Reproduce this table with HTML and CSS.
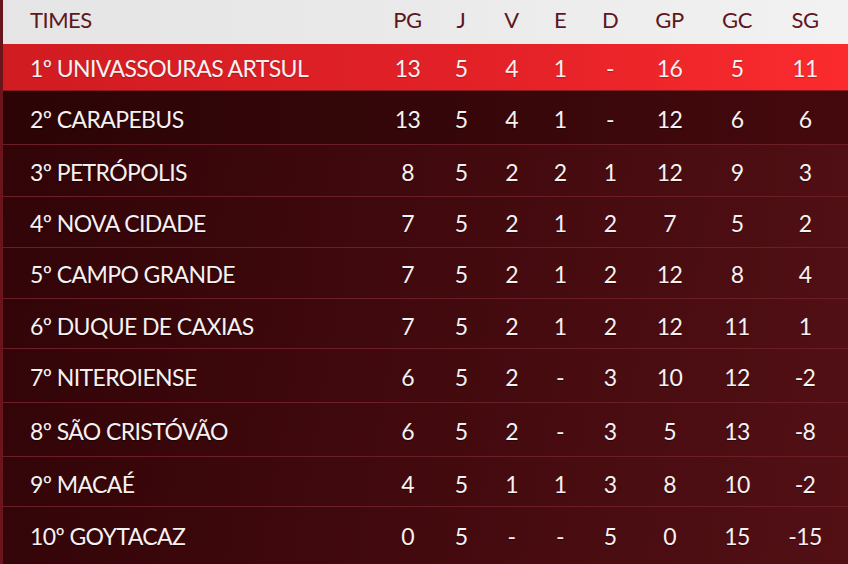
FILE: index.html
```html
<!DOCTYPE html>
<html lang="pt-BR">
<head>
<meta charset="utf-8">
<title>Classificação</title>
<link rel="stylesheet" href="styles.css">
</head>
<body>
<div class="table">
  <div class="row head">
    <div class="name">TIMES</div><div>PG</div><div>J</div><div>V</div><div>E</div><div>D</div><div>GP</div><div>GC</div><div>SG</div>
  </div>
  <div class="row lead">
    <div class="name">1º UNIVASSOURAS ARTSUL</div><div>13</div><div>5</div><div>4</div><div>1</div><div>-</div><div>16</div><div>5</div><div>11</div>
  </div>
  <div class="row tall">
    <div class="name">2º CARAPEBUS</div><div>13</div><div>5</div><div>4</div><div>1</div><div>-</div><div>12</div><div>6</div><div>6</div>
  </div>
  <div class="row">
    <div class="name">3º PETRÓPOLIS</div><div>8</div><div>5</div><div>2</div><div>2</div><div>1</div><div>12</div><div>9</div><div>3</div>
  </div>
  <div class="row short">
    <div class="name">4º NOVA CIDADE</div><div>7</div><div>5</div><div>2</div><div>1</div><div>2</div><div>7</div><div>5</div><div>2</div>
  </div>
  <div class="row short">
    <div class="name">5º CAMPO GRANDE</div><div>7</div><div>5</div><div>2</div><div>1</div><div>2</div><div>12</div><div>8</div><div>4</div>
  </div>
  <div class="row shorter">
    <div class="name">6º DUQUE DE CAXIAS</div><div>7</div><div>5</div><div>2</div><div>1</div><div>2</div><div>12</div><div>11</div><div>1</div>
  </div>
  <div class="row tall">
    <div class="name">7º NITEROIENSE</div><div>6</div><div>5</div><div>2</div><div>-</div><div>3</div><div>10</div><div>12</div><div>-2</div>
  </div>
  <div class="row tall">
    <div class="name">8º SÃO CRISTÓVÃO</div><div>6</div><div>5</div><div>2</div><div>-</div><div>3</div><div>5</div><div>13</div><div>-8</div>
  </div>
  <div class="row shorter">
    <div class="name">9º MACAÉ</div><div>4</div><div>5</div><div>1</div><div>1</div><div>3</div><div>8</div><div>10</div><div>-2</div>
  </div>
  <div class="row last">
    <div class="name">10º GOYTACAZ</div><div>0</div><div>5</div><div>-</div><div>-</div><div>5</div><div>0</div><div>15</div><div>-15</div>
  </div>
</div>
</body>
</html>
```
FILE: styles.css
```css
html, body {
  margin: 0;
  padding: 0;
}
body {
  width: 848px;
  height: 564px;
  overflow: hidden;
  background: linear-gradient(100deg, #300407 0%, #3e080c 40%, #521015 100%);
  font-family: Lato, "Open Sans", sans-serif;
  border-left: 3px solid #6a151b;
  box-sizing: border-box;
}
.table {
  display: flex;
  flex-direction: column;
}
.row {
  display: grid;
  grid-template-columns: 350px 55px 52px 49px 48px 52px 67px 68px 68px;
  align-items: center;
  height: 52px;
  padding-left: 27px;
  padding-top: 2px;
  box-sizing: border-box;
  border-bottom: 1px solid #6b1e25;
  color: #f7f1f1;
  font-size: 23px;
  letter-spacing: -0.6px;
  text-shadow: 0 1px 1px rgba(0, 0, 0, 0.45);
}
.row.tall {
  height: 54px;
}
.row.short {
  height: 51px;
}
.row.shorter {
  height: 50px;
  padding-top: 4px;
}
.row > div {
  text-align: center;
  white-space: nowrap;
}
.row > .name {
  text-align: left;
}
.row.head {
  height: 44px;
  border-bottom: none;
  padding-top: 0;
  padding-bottom: 5px;
  background: linear-gradient(90deg, #e4e5e4 0%, #e9eae9 50%, #f2f2f2 100%);
  color: #5e1621;
  font-size: 22px;
  letter-spacing: -0.5px;
  text-shadow: none;
}
.row.lead {
  height: 47px;
  padding-top: 1px;
  border-bottom: 1px solid #8a1a1f;
  background: linear-gradient(90deg, #d11c22 0%, #e42228 60%, #fb2b2d 100%);
  text-shadow: 0 1px 1px rgba(90, 0, 0, 0.35);
}
.row:nth-child(3) {
  background: linear-gradient(90deg, #2c0406 0%, #37070a 60%, #45090d 100%);
}
.row.last {
  border-bottom: none;
  height: 57px;
  padding-top: 0;
}
```
